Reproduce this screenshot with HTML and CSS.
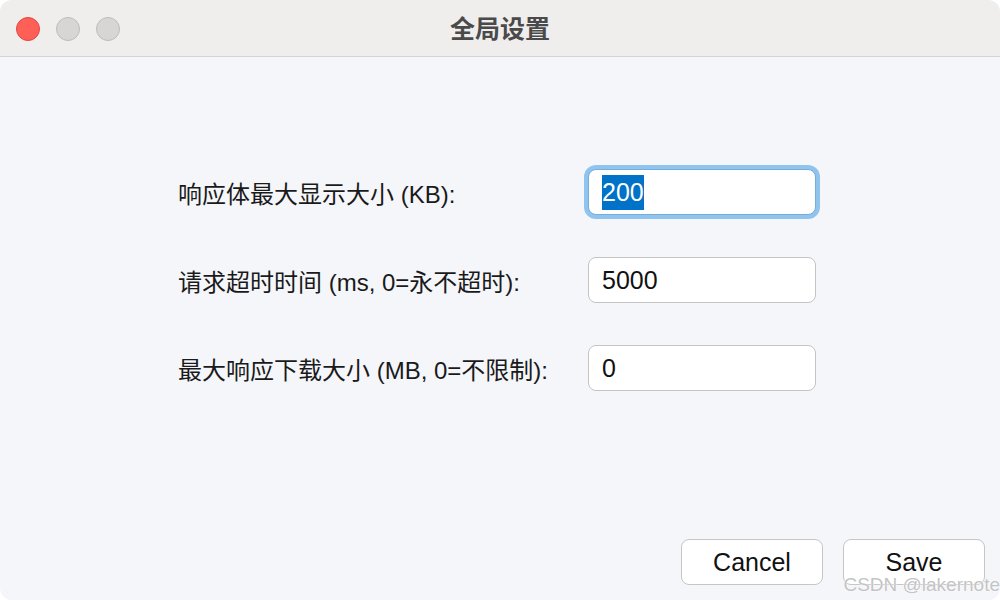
FILE: index.html
```html
<!DOCTYPE html>
<html lang="zh">
<head>
<meta charset="utf-8">
<title>全局设置</title>
<link rel="stylesheet" href="styles.css">
</head>
<body>
<div class="window">
  <div class="titlebar">
    <div class="lights">
      <span class="light close"></span>
      <span class="light"></span>
      <span class="light"></span>
    </div>
    <div class="title">全局设置</div>
  </div>
  <div class="content">
    <div class="form">
      <div class="label">响应体最大显示大小 (KB):</div>
      <div class="field focused"><span class="sel">200</span></div>
      <div class="label">请求超时时间 (ms, 0=永不超时):</div>
      <div class="field">5000</div>
      <div class="label">最大响应下载大小 (MB, 0=不限制):</div>
      <div class="field">0</div>
    </div>
    <div class="footer">
      <button class="btn">Cancel</button>
      <button class="btn">Save</button>
    </div>
  </div>
  <div class="watermark">CSDN @lakernote</div>
</div>
</body>
</html>
```
FILE: styles.css
```css
html, body {
  margin: 0;
  padding: 0;
  background: #ffffff;
}
body {
  font-family: "Liberation Sans", "Noto Sans CJK SC", sans-serif;
  color: #1d1d1d;
}
.window {
  position: relative;
  width: 1000px;
  height: 600px;
  border-radius: 12px;
  overflow: hidden;
  display: flex;
  flex-direction: column;
  background: #f5f6fa;
}
.titlebar {
  position: relative;
  height: 56px;
  flex: none;
  background: #efeeed;
  border-bottom: 1px solid #d3d3d3;
  display: flex;
  align-items: center;
}
.lights {
  display: flex;
  gap: 16px;
  padding-left: 16px;
  padding-top: 2px;
}
.light {
  width: 22px;
  height: 22px;
  border-radius: 50%;
  background: #d7d6d4;
  border: 1px solid #bdbcba;
}
.light.close {
  background: #fe5f57;
  border-color: #e2463f;
}
.title {
  position: absolute;
  left: 0;
  right: 0;
  top: 0;
  bottom: 0;
  display: flex;
  align-items: center;
  justify-content: center;
  font-family: "Noto Sans CJK SC", sans-serif;
  font-weight: bold;
  font-size: 25px;
  color: #4a4a4a;
  padding-bottom: 3px;
}
.content {
  flex: 1;
  display: flex;
  flex-direction: column;
}
.form {
  display: grid;
  grid-template-columns: 410px 228px;
  row-gap: 42px;
  align-items: center;
  margin-left: 178px;
  margin-top: 112px;
}
.label {
  font-size: 24px;
  color: #1a1a1a;
  white-space: nowrap;
}
.field {
  box-sizing: border-box;
  height: 46px;
  background: #ffffff;
  border: 1px solid #c4c4c4;
  border-radius: 8px;
  padding-left: 13px;
  font-size: 25px;
  line-height: 44px;
  color: #111;
}
.field.focused {
  border: 1px solid #78acd9;
  box-shadow: 0 0 0 4px #8fc4ef;
}
.sel {
  display: inline-block;
  background: #0072c7;
  color: #ffffff;
  line-height: 35px;
}
.footer {
  margin-top: auto;
  display: flex;
  justify-content: flex-end;
  gap: 20px;
  padding: 0 15px 15px 0;
}
.btn {
  width: 142px;
  height: 46px;
  background: #ffffff;
  border: 1px solid #c6c6c6;
  border-radius: 8px;
  font-family: "Liberation Sans", sans-serif;
  font-size: 25px;
  color: #111;
  padding: 0;
}
.watermark {
  position: absolute;
  right: 0;
  bottom: 4px;
  font-family: "Liberation Sans", sans-serif;
  font-size: 19px;
  color: #c4c4c4;
  text-shadow: 0 0 2px #ffffff, 0 0 1px #ffffff;
}
```
